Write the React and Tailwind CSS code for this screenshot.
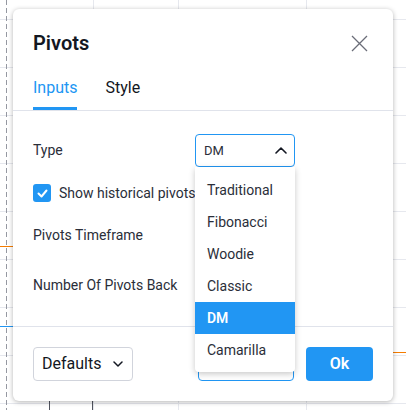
import React, { useState } from 'react';

const types = ['Traditional', 'Fibonacci', 'Woodie', 'Classic', 'DM', 'Camarilla'];

function ChartBackdrop() {
  const rows = [19, 67, 115, 163, 211, 259, 307, 355, 403];
  const cols = [93, 178, 306];
  return (
    <svg className="absolute inset-0" width="406" height="410" viewBox="0 0 406 410">
      {rows.map((y) => (
        <line key={y} x1="0" y1={y + 0.5} x2="406" y2={y + 0.5} stroke="#e6e8ee" strokeWidth="1" />
      ))}
      {cols.map((x) => (
        <line key={x} x1={x + 0.5} y1="0" x2={x + 0.5} y2="410" stroke="#e6e8ee" strokeWidth="1" />
      ))}
      <line x1="6.5" y1="0" x2="6.5" y2="410" stroke="#9598a1" strokeWidth="1" strokeDasharray="5 3" />
      <line x1="0" y1="246.5" x2="20" y2="246.5" stroke="#f57c00" strokeWidth="1" />
      <line x1="0" y1="326.5" x2="20" y2="326.5" stroke="#2196f3" strokeWidth="1" />
      <line x1="380" y1="352.5" x2="406" y2="352.5" stroke="#f57c00" strokeWidth="1" />
      <line x1="49.5" y1="398" x2="49.5" y2="410" stroke="#50535e" strokeWidth="1" />
      <line x1="92.5" y1="398" x2="92.5" y2="410" stroke="#50535e" strokeWidth="1" />
    </svg>
  );
}

export default function App() {
  const [tab, setTab] = useState('inputs');
  const [type, setType] = useState('DM');
  const [showHistory, setShowHistory] = useState(true);

  return (
    <div className="relative w-[406px] h-[410px] overflow-hidden bg-white pt-[9px] pl-[13px] font-['Roboto',sans-serif] text-[#131722]">
      <ChartBackdrop />

      {/* Dialog */}
      <div className="relative w-[380px] h-[392px] bg-white rounded-[6px] shadow-[0_1px_5px_rgba(0,0,0,0.3)] flex flex-col">
        <div className="px-5 pt-5 flex items-start justify-between">
          <h1 className="text-[20px] leading-[28px] font-semibold">Pivots</h1>
          <button className="w-[28px] h-[28px] flex items-center justify-center text-[#6a6d78]" aria-label="Close">
            <svg width="17" height="17" viewBox="0 0 17 17" fill="none" stroke="currentColor" strokeWidth="1.3">
              <path d="M1 1l15 15M16 1L1 16" />
            </svg>
          </button>
        </div>

        {/* Tabs */}
        <div className="mt-[19px] px-5 flex gap-7 border-b border-[#e0e3eb]">
          <button
            onClick={() => setTab('inputs')}
            className={`text-[16px] leading-[24px] pb-[7px] border-b-[3px] ${tab === 'inputs' ? 'text-[#2196f3] border-[#2196f3]' : 'border-transparent'}`}
          >
            Inputs
          </button>
          <button
            onClick={() => setTab('style')}
            className={`text-[16px] leading-[24px] pb-[7px] border-b-[3px] ${tab === 'style' ? 'text-[#2196f3] border-[#2196f3]' : 'border-transparent'}`}
          >
            Style
          </button>
        </div>

        {/* Inputs */}
        <div className="px-5 flex flex-col text-[14px] text-[#2a2e39]">
          <div className="mt-[23px] h-[33px] flex items-center">
            <span className="w-[162px]">Type</span>
            <div className="relative w-[100px] h-[33px] border border-[#2196f3] rounded-[4px] flex items-center justify-between pl-[8px] pr-[7px]">
              <span className="text-[13px]">{type}</span>
              <svg width="12" height="7" viewBox="0 0 12 7" fill="none" stroke="#131722" strokeWidth="1.6" strokeLinecap="round" strokeLinejoin="round">
                <path d="M1 6l5-5 5 5" />
              </svg>

              {/* Dropdown list */}
              <div className="absolute -left-px top-[32px] z-10 w-[100px] bg-white rounded-b-[4px] shadow-[0_2px_6px_rgba(0,0,0,0.22)] pt-[7px] pb-[6px]">
                {types.map((t) => (
                  <div
                    key={t}
                    onClick={() => setType(t)}
                    className={`h-[32px] flex items-center pl-[12px] ${t === type ? 'bg-[#2196f3] text-white font-semibold' : 'text-[#2a2e39]'}`}
                  >
                    {t}
                  </div>
                ))}
              </div>
            </div>
          </div>

          <div className="mt-[17px] h-[18px] flex items-center gap-2">
            <button
              onClick={() => setShowHistory(!showHistory)}
              className={`w-[18px] h-[18px] rounded-[3px] flex items-center justify-center ${showHistory ? 'bg-[#2196f3]' : 'border border-[#b2b5be]'}`}
            >
              {showHistory && (
                <svg width="11" height="9" viewBox="0 0 11 9" fill="none" stroke="white" strokeWidth="2" strokeLinecap="round" strokeLinejoin="round">
                  <path d="M1.5 4.5l3 3 5-6" />
                </svg>
              )}
            </button>
            <span>Show historical pivots</span>
          </div>

          <div className="mt-[16px] h-[34px] flex items-center">
            <span className="w-[162px]">Pivots Timeframe</span>
          </div>

          <div className="mt-[16px] h-[34px] flex items-center">
            <span className="w-[162px]">Number Of Pivots Back</span>
          </div>
        </div>

        {/* Footer */}
        <div className="mt-[24px] border-t border-[#e0e3eb] px-5 pt-5 flex items-center">
          <button className="w-[100px] h-[34px] border border-[#d1d4dc] rounded-[4px] flex items-center justify-between pl-[8px] pr-[9px] text-[16px]">
            <span>Defaults</span>
            <svg width="10" height="6" viewBox="0 0 10 6" fill="none" stroke="#131722" strokeWidth="1.5" strokeLinecap="round" strokeLinejoin="round">
              <path d="M1 1l4 4 4-4" />
            </svg>
          </button>
          {/* Cancel sits under the open list */}
          <button aria-label="Cancel" className="ml-auto w-[96px] h-[34px] border border-[#2196f3] rounded-[4px]" />
          <button className="ml-[12px] w-[67px] h-[34px] bg-[#2196f3] rounded-[4px] text-white text-[16px] font-semibold">
            Ok
          </button>
        </div>
      </div>
    </div>
  );
}
